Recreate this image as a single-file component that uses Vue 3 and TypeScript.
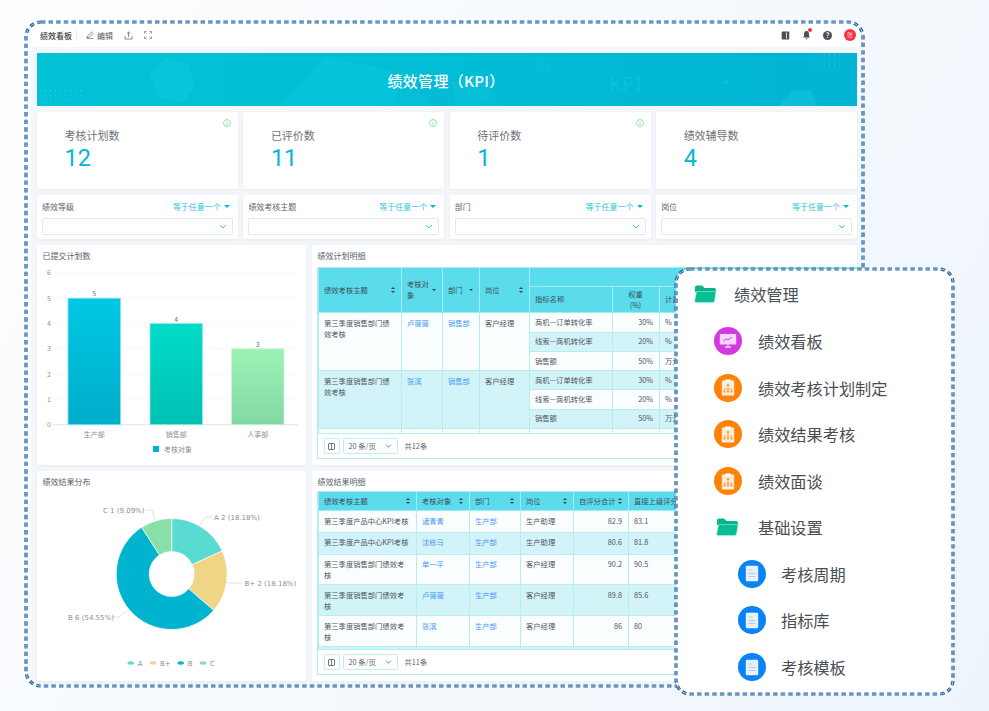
<script setup lang="ts">
const cards = [
  { label: '考核计划数', value: '12', info: true },
  { label: '已评价数', value: '11', info: true },
  { label: '待评价数', value: '1', info: true },
  { label: '绩效辅导数', value: '4', info: false },
]
const filters = ['绩效等级', '绩效考核主题', '部门', '岗位']
const baseY = 161.7
const yTicks = [0, 1, 2, 3, 4, 5, 6].map((v) => ({ v, y: baseY - v * 25.3 }))
const bars = [
  { name: '生产部', v: 5, x: 31, g: 'url(#b1)', s: '#7fe3f2' },
  { name: '销售部', v: 4, x: 113, g: 'url(#b2)', s: '#8cf0e2' },
  { name: '人事部', v: 3, x: 194.5, g: 'url(#b3)', s: '#c8f7d2' },
].map((b) => ({ ...b, h: b.v * 25.3, y: baseY - b.v * 25.3 }))

const pieData = [
  { n: 'A', pct: 2 / 11, c: '#5adbd2' },
  { n: 'B+', pct: 2 / 11, c: '#f0d587' },
  { n: 'B', pct: 6 / 11, c: '#00b4d0' },
  { n: 'C', pct: 1 / 11, c: '#88dfa8' },
]
const cx = 134.7
const cy = 85
const ro = 55.5
const ri = 22.5
let acc = 0
const pie = pieData.map((p) => {
  const a0 = acc * Math.PI * 2
  acc += p.pct
  const a1 = acc * Math.PI * 2
  const pt = (r: number, a: number) =>
    `${(cx + r * Math.sin(a)).toFixed(2)} ${(cy - r * Math.cos(a)).toFixed(2)}`
  const large = a1 - a0 > Math.PI ? 1 : 0
  return {
    ...p,
    d: `M${pt(ro, a0)} A${ro} ${ro} 0 ${large} 1 ${pt(ro, a1)} L${pt(ri, a1)} A${ri} ${ri} 0 ${large} 0 ${pt(ri, a0)} Z`,
  }
})
const pieLabels = [
  { t: 'C 1 (9.09%)', x: 66, y: 23.5, d: 'M109 21H115L118 31' },
  { t: 'A 2 (18.18%)', x: 177, y: 31, d: 'M175 28H169L161 37' },
  { t: 'B+ 2 (18.18%)', x: 207.5, y: 96.5, d: 'M205 94H192L187 93' },
  { t: 'B 6 (54.55%)', x: 31, y: 130.5, d: 'M74 128H82L90 122' },
]
const pieLegend = [
  { n: 'A', x: 93.7, c: '#5adbd2' },
  { n: 'B+', x: 116, c: '#f0d587' },
  { n: 'B', x: 143.7, c: '#00b4d0' },
  { n: 'C', x: 166, c: '#88dfa8' },
]

const planGroups = [
  { name: '卢薇薇', stripe: false },
  { name: '张滨', stripe: true },
]
const metrics = [
  { n: '商机—订单转化率', w: '30%', u: '%' },
  { n: '线索—商机转化率', w: '20%', u: '%' },
  { n: '销售额', w: '50%', u: '万元' },
]
const results = [
  { t: '第三季度产品中心KPI考核', n: '诸青青', p: '生产助理', a: '82.9', b: '83.1', tall: false },
  { t: '第三季度产品中心KPI考核', n: '沈栋马', p: '生产助理', a: '80.6', b: '81.8', tall: false },
  { t: '第三季度销售部门绩效考核', n: '单一平', p: '客户经理', a: '90.2', b: '90.5', tall: true },
  { t: '第三季度销售部门绩效考核', n: '卢薇薇', p: '客户经理', a: '89.8', b: '85.6', tall: true },
  { t: '第三季度销售部门绩效考核', n: '张滨', p: '客户经理', a: '86', b: '80', tall: true },
]
const menu = [
  { t: '绩效看板', k: 'screen' },
  { t: '绩效考核计划制定', k: 'plan' },
  { t: '绩效结果考核', k: 'plan' },
  { t: '绩效面谈', k: 'plan' },
]
const sub = ['考核周期', '指标库', '考核模板']
</script>

<template>
  <div class="page">
    <div class="board">
      <svg class="dash" width="848" height="676" viewBox="0 0 848 676">
        <rect class="d1" x="3" y="3" width="837" height="664" rx="15" />
        <rect class="d2" x="3" y="3" width="837" height="664" rx="15" />
      </svg>
      <header class="toolbar">
        <div class="tool-left">
          <span class="tb-title">绩效看板</span>
          <span class="tb-sep"></span>
          <svg class="ic pencil" width="8" height="8" viewBox="0 0 8 8"><path d="M1 7l.5-2L5.600 1 7 2.400 3 6.500 1 7zM.5 7.600h7" fill="none" stroke="#6b7078" stroke-width=".8" /></svg>
          <span class="tb-edit">编辑</span>
          <svg class="ic up" width="9" height="9" viewBox="0 0 9 9"><path d="M4.500 6V1M2.800 2.600 4.500 1l1.700 1.600M1 5v3h7V5" fill="none" stroke="#6b7078" stroke-width=".8" /></svg>
          <svg class="ic full" width="8" height="8" viewBox="0 0 8 8"><path d="M.5 2.500v-2h2M5.500.5h2v2M7.500 5.500v2h-2M2.500 7.500h-2v-2M2.500 2.500 1.500 1.500M5.500 2.500l1-1M5.500 5.500l1 1M2.500 5.500l-1 1" fill="none" stroke="#6b7078" stroke-width=".7" /></svg>
        </div>
        <div class="tool-right">
          <svg width="9" height="9" viewBox="0 0 9 9"><rect x=".7" y=".5" width="7.600" height="8" rx="1" fill="#4c5059" /><rect x="5.200" y="1.500" width=".8" height="6" fill="#fff" /></svg>
          <span class="bell">
            <svg width="9" height="10" viewBox="0 0 9 10"><path d="M4.500 1C2.700 1 2 2.500 2 4v2L1 7.500h7L7 6V4C7 2.500 6.300 1 4.500 1zM3.500 8.300a1 1 0 0 0 2 0z" fill="#4c5059" /></svg>
            <i></i>
          </span>
          <span class="help">?</span>
          <span class="avatar">张</span>
        </div>
      </header>

      <main class="content">
        <section class="banner">
          <svg class="banner-art" width="820" height="53" viewBox="0 0 820 53">
            <path d="M128 5l25 7 5 23-13 15-25-6-7-24z" fill="#0ecbdc" opacity=".55" />
            <path d="M243 53 L288 3l82 18 25 32z" fill="#08c8dc" opacity=".5" />
            <path d="M358 53l4-24 40-8 54 12 0 20z" fill="#04b8d4" opacity=".4" />
            <path d="M415 30l22-10 19 12-3 14-12 7h-22z" fill="#0ac6dc" opacity=".5" />
            <circle cx="506" cy="13" r="6" fill="none" stroke="#0cc0d8" stroke-width="3" opacity=".45" />
            <path d="M741 53l14-15 20-1 5 16z" fill="#12bfdc" opacity=".7" />
            <path d="M689 26l2 3h-4zM685 30h8" fill="none" stroke="#0cc0d8" stroke-width="1" />
            <text x="572" y="38" class="wm">KPI</text>
          </svg>
          <h1>绩效管理（KPI）</h1>
          <span class="dots dots-a"></span>
          <span class="dots dots-b"></span>
        </section>

        <section class="row4 stats">
          <article v-for="c in cards" :key="c.label" class="card stat">
            <svg v-if="c.info" class="info" width="8" height="8" viewBox="0 0 8 8">
              <circle cx="4" cy="4" r="3.500" fill="none" stroke="#72e096" stroke-width=".8" />
              <path d="M4 2v.8M4 3.500V6" stroke="#72e096" stroke-width=".8" />
            </svg>
            <div class="stat-label">{{ c.label }}</div>
            <div class="stat-value">{{ c.value }}</div>
          </article>
        </section>

        <section class="row4 filters">
          <article v-for="f in filters" :key="f" class="card filter">
            <div class="filter-head">
              <span>{{ f }}</span>
              <span class="any">等于任意一个<i class="tri"></i></span>
            </div>
            <div class="select">
              <svg width="8" height="5" viewBox="0 0 8 5"><path d="M1 1l3 3 3-3" fill="none" stroke="#2cc3da" stroke-width=".9" /></svg>
            </div>
          </article>
        </section>

        <section class="panels">
          <article class="card panel">
            <div class="ptitle">已提交计划数</div>
            <svg class="chart" width="269" height="180" viewBox="0 0 269 180">
              <defs>
                <linearGradient id="b1" x1="0" y1="0" x2="0" y2="1"><stop offset="0" stop-color="#00c8e4" /><stop offset="1" stop-color="#00acca" /></linearGradient>
                <linearGradient id="b2" x1="0" y1="0" x2="0" y2="1"><stop offset="0" stop-color="#00dcc8" /><stop offset="1" stop-color="#00c0b2" /></linearGradient>
                <linearGradient id="b3" x1="0" y1="0" x2="0" y2="1"><stop offset="0" stop-color="#9cf2b6" /><stop offset="1" stop-color="#82d8a2" /></linearGradient>
              </defs>
              <g v-for="t in yTicks" :key="t.v">
                <line x1="16" x2="261" :y1="t.y" :y2="t.y" class="grid" />
                <text x="14" :y="t.y + 2.500" class="axis" text-anchor="end">{{ t.v }}</text>
              </g>
              <line x1="16" x2="261" :y1="baseY" :y2="baseY" class="axisline" />
              <g v-for="b in bars" :key="b.name">
                <rect :x="b.x" :y="b.y" width="52.500" :height="b.h" :fill="b.g" :stroke="b.s" stroke-width=".8" />
                <text :x="b.x + 26.250" :y="b.y - 2" class="axis val" text-anchor="middle">{{ b.v }}</text>
                <text :x="b.x + 26.250" y="173.500" class="axis" text-anchor="middle">{{ b.name }}</text>
              </g>
            </svg>
            <div class="bar-legend"><i></i>考核对象</div>
          </article>

          <article class="card panel">
            <div class="ptitle">绩效计划明细</div>
            <div class="twrap">
              <div class="tclip t1clip">
                <table class="tbl t1">
                  <colgroup>
                    <col class="w83" /><col class="w41" /><col class="w37" /><col class="w50" /><col class="w83" /><col class="w47" /><col class="w198" />
                  </colgroup>
                  <thead>
                    <tr class="h19">
                      <th rowspan="2"><span class="th">绩效考核主题<i class="sort"></i></span></th>
                      <th rowspan="2"><span class="th">考核对象<i class="tri dk"></i></span></th>
                      <th rowspan="2"><span class="th">部门<i class="tri dk"></i></span></th>
                      <th rowspan="2"><span class="th">岗位<i class="sort"></i></span></th>
                      <th colspan="3" class="center">考核指标</th>
                    </tr>
                    <tr class="h26">
                      <th>指标名称</th>
                      <th class="center">权重<br />(%)</th>
                      <th>计量单位</th>
                    </tr>
                  </thead>
                  <tbody v-for="g in planGroups" :key="g.name">
                    <tr v-for="(m, i) in metrics" :key="m.n" class="h19">
                      <template v-if="i === 0">
                        <td rowspan="3" :class="{ stripe: g.stripe }">第三季度销售部门绩效考核</td>
                        <td rowspan="3" :class="{ stripe: g.stripe }"><a>{{ g.name }}</a></td>
                        <td rowspan="3" :class="{ stripe: g.stripe }"><a>销售部</a></td>
                        <td rowspan="3" :class="{ stripe: g.stripe }">客户经理</td>
                      </template>
                      <td :class="{ stripe: g.stripe === (i % 2 === 0) }" class="mid">{{ m.n }}</td>
                      <td :class="{ stripe: g.stripe === (i % 2 === 0) }" class="mid right">{{ m.w }}</td>
                      <td :class="{ stripe: g.stripe === (i % 2 === 0) }" class="mid">{{ m.u }}</td>
                    </tr>
                  </tbody>
                  <tbody>
                    <tr class="h19">
                      <td></td><td></td><td></td><td></td><td></td><td></td><td></td>
                    </tr>
                  </tbody>
                </table>
              </div>
              <div class="pager">
                <span class="pbtn"><svg width="7" height="7" viewBox="0 0 7 7"><rect x=".5" y=".5" width="6" height="6" rx=".5" fill="none" stroke="#555" stroke-width=".8" /><path d="M3.500.5v6" stroke="#555" stroke-width=".8" /></svg></span>
                <span class="psel">20 条/页<svg width="7" height="4" viewBox="0 0 7 4"><path d="M1 .7l2.500 2.500L6 .7" fill="none" stroke="#666" stroke-width=".8" /></svg></span>
                <span class="ptotal">共12条</span>
              </div>
            </div>
          </article>

          <article class="card panel">
            <div class="ptitle">绩效结果分布</div>
            <svg class="chart" width="269" height="192" viewBox="0 0 269 192">
              <path v-for="p in pie" :key="p.n" :d="p.d" :fill="p.c" stroke="#fff" stroke-width=".7" />
              <g v-for="l in pieLabels" :key="l.t">
                <path :d="l.d" fill="none" stroke="#c9ccd0" stroke-width=".6" />
                <text :x="l.x" :y="l.y" class="pie-t">{{ l.t }}</text>
              </g>
              <g v-for="l in pieLegend" :key="l.n">
                <ellipse :cx="l.x" cy="174" rx="3.300" ry="1.700" :fill="l.c" />
                <text :x="l.x + 7" y="176.500" class="pie-t">{{ l.n }}</text>
              </g>
            </svg>
          </article>

          <article class="card panel">
            <div class="ptitle ptitle-tight">绩效结果明细</div>
            <div class="twrap">
              <div class="tclip t2clip">
                <table class="tbl t2">
                  <colgroup>
                    <col class="w98" /><col class="w53" /><col class="w51" /><col class="w53" /><col class="w55" /><col class="w229" />
                  </colgroup>
                  <thead>
                    <tr class="h19">
                      <th><span class="th">绩效考核主题<i class="sort"></i></span></th>
                      <th><span class="th">考核对象<i class="sort"></i></span></th>
                      <th><span class="th">部门<i class="sort"></i></span></th>
                      <th><span class="th">岗位<i class="sort"></i></span></th>
                      <th><span class="th">自评分合计<i class="sort"></i></span></th>
                      <th>直接上级评分</th>
                    </tr>
                  </thead>
                  <tbody>
                    <tr v-for="(r, i) in results" :key="i" :class="r.tall ? 'h30' : 'h22'">
                      <td :class="{ stripe: i % 2 === 1 }">{{ r.t }}</td>
                      <td :class="{ stripe: i % 2 === 1 }"><a>{{ r.n }}</a></td>
                      <td :class="{ stripe: i % 2 === 1 }"><a>生产部</a></td>
                      <td :class="{ stripe: i % 2 === 1 }">{{ r.p }}</td>
                      <td :class="{ stripe: i % 2 === 1 }" class="right">{{ r.a }}</td>
                      <td :class="{ stripe: i % 2 === 1 }">{{ r.b }}</td>
                    </tr>
                    <tr class="h22">
                      <td class="stripe"></td><td class="stripe"></td><td class="stripe"></td><td class="stripe"></td><td class="stripe"></td><td class="stripe"></td>
                    </tr>
                  </tbody>
                </table>
              </div>
              <div class="pager">
                <span class="pbtn"><svg width="7" height="7" viewBox="0 0 7 7"><rect x=".5" y=".5" width="6" height="6" rx=".5" fill="none" stroke="#555" stroke-width=".8" /><path d="M3.500.5v6" stroke="#555" stroke-width=".8" /></svg></span>
                <span class="psel">20 条/页<svg width="7" height="4" viewBox="0 0 7 4"><path d="M1 .7l2.500 2.500L6 .7" fill="none" stroke="#666" stroke-width=".8" /></svg></span>
                <span class="ptotal">共11条</span>
              </div>
            </div>
          </article>
        </section>
      </main>
    </div>

    <aside class="menu">
      <svg class="dash" width="285" height="433" viewBox="0 0 285 433">
        <rect class="d1" x="2" y="2" width="277" height="425" rx="14" />
        <rect class="d2" x="2" y="2" width="277" height="425" rx="14" />
      </svg>
      <div class="m-row m-root">
        <svg class="folder" width="23" height="18" viewBox="0 0 23 18"><path d="M1 2.500Q1 .5 3 .5h5l2.500 2.500H20q2 0 2 2v2H1z" fill="#08b48c" /><path d="M2.500 6.500H22l-1.500 9.500q-.2 1.500-2 1.500H2q-1.500 0-1.300-1.500z" fill="#06bd94" stroke="#bff0e4" stroke-width=".5" /></svg>
        <span>绩效管理</span>
      </div>
      <div v-for="m in menu" :key="m.t" class="m-row m-item">
        <span class="mi" :class="m.k === 'screen' ? 'mi-screen' : 'mi-plan'">
          <svg v-if="m.k === 'screen'" width="18" height="16" viewBox="0 0 18 16"><rect x=".8" y="1" width="16.400" height="10.500" rx="1" fill="#f6d8fa" /><path d="M4 8l3-2 2 1 4-3" fill="none" stroke="#d438e0" stroke-width=".9" /><path d="M6 14h6M9 11.500V14" stroke="#f6d8fa" stroke-width="1.400" /></svg>
          <svg v-else width="14" height="17" viewBox="0 0 14 17"><rect x=".8" y="1.500" width="12.400" height="15" rx="1" fill="#ffecd9" /><rect x="4" y=".5" width="6" height="2.500" fill="#fff" /><path d="M7 6v3M3.500 12v-2h7v2M7 9v3" fill="none" stroke="#ff9a3c" stroke-width=".7" /><rect x="5.900" y="5" width="2.200" height="2.200" fill="#ff9a3c" /><rect x="2.500" y="11.500" width="2" height="2" fill="#ff9a3c" /><rect x="6" y="11.500" width="2" height="2" fill="#ff9a3c" /><rect x="9.500" y="11.500" width="2" height="2" fill="#ff9a3c" /></svg>
        </span>
        <span>{{ m.t }}</span>
      </div>
      <div class="m-row m-item m-folder">
        <svg class="folder" width="23" height="18" viewBox="0 0 23 18"><path d="M1 2.500Q1 .5 3 .5h5l2.500 2.500H20q2 0 2 2v2H1z" fill="#08b48c" /><path d="M2.500 6.500H22l-1.500 9.500q-.2 1.500-2 1.500H2q-1.500 0-1.300-1.500z" fill="#06bd94" stroke="#bff0e4" stroke-width=".5" /></svg>
        <span>基础设置</span>
      </div>
      <div v-for="s in sub" :key="s" class="m-row m-sub">
        <span class="mi mi-doc">
          <svg width="14" height="17" viewBox="0 0 14 17"><rect x=".8" y=".8" width="12.400" height="15.400" rx="1.200" fill="#e6f2ff" /><path d="M3.500 5h4M3.500 8.500h7M3.500 11.500h7" stroke="#a9cdf8" stroke-width="1.100" /></svg>
        </span>
        <span>{{ s }}</span>
      </div>
    </aside>
  </div>
</template>

<style>
html,
body {
  margin: 0;
  padding: 0;
}
</style>

<style scoped>
.page {
  position: relative;
  width: 989px;
  height: 711px;
  overflow: hidden;
  box-sizing: border-box;
  padding: 23px 0 0 31px;
  background: linear-gradient(120deg, #fdfeff 0%, #f5f9fd 55%, #edf4fc 100%);
  font-family: "Noto Sans CJK SC", "Noto Sans", sans-serif;
  color: #4a4f57;
}
.board {
  position: relative;
  width: 830px;
  height: 661px;
  background: #f3f6fa;
  border-radius: 8px 8px 0 0;
}
.dash {
  position: absolute;
  z-index: 5;
  pointer-events: none;
}
.board > .dash {
  left: -8px;
  top: -4px;
}
.d1,
.d2 {
  fill: none;
  stroke-dasharray: 4.400 3.200;
}
.d1 {
  stroke: #22649c;
  stroke-width: 3.200;
}
.d2 {
  stroke: #d5e4f0;
  stroke-width: .8;
}
.toolbar {
  height: 24px;
  background: #fff;
  display: flex;
  align-items: center;
  justify-content: space-between;
  font-size: 8px;
  padding: 0 5px 0 9px;
  box-sizing: border-box;
  border-radius: 8px 8px 0 0;
}
.tool-left,
.tool-right {
  display: flex;
  align-items: center;
}
.tb-title {
  color: #3c4149;
  font-weight: 500;
}
.tb-sep {
  width: 1px;
  height: 12px;
  background: #eceef1;
  margin: 0 9px 0 4px;
}
.tb-edit {
  margin: 0 11px 0 3px;
  color: #555a62;
}
.full {
  margin-left: 11px;
}
.tool-right {
  gap: 12px;
}
.bell {
  position: relative;
  display: flex;
}
.bell i {
  position: absolute;
  right: -1px;
  top: -2px;
  width: 4px;
  height: 4px;
  border-radius: 50%;
  background: #f5343f;
}
.help {
  width: 9px;
  height: 9px;
  border-radius: 50%;
  background: #4c5059;
  color: #fff;
  font-size: 7px;
  line-height: 9px;
  text-align: center;
  font-weight: 700;
}
.avatar {
  width: 12px;
  height: 12px;
  border-radius: 50%;
  background: #f5343f;
  color: #fdd;
  font-size: 6px;
  line-height: 12px;
  text-align: center;
}
.content {
  padding: 6px 4px 0 6px;
  display: flex;
  flex-direction: column;
  gap: 6px;
}
.banner {
  position: relative;
  height: 53px;
  background: linear-gradient(90deg, #02c2d6 0%, #02bed6 40%, #00b5d4 100%);
  display: flex;
  align-items: center;
  justify-content: center;
  overflow: hidden;
}
.banner h1 {
  position: relative;
  margin: 2px 0 0;
  font-size: 15px;
  font-weight: 500;
  color: #fff;
  letter-spacing: .3px;
  transform: translateX(-1px);
}
.banner-art {
  position: absolute;
  inset: 0;
}
.wm {
  font-family: "Noto Sans", sans-serif;
  font-size: 19px;
  letter-spacing: 1.500px;
  fill: #0bc0da;
}
.dots {
  position: absolute;
  width: 40px;
  height: 15px;
  background-image: radial-gradient(circle, rgba(255, 255, 255, .2) .5px, transparent .8px);
  background-size: 5px 5px;
}
.dots-a {
  left: 6px;
  bottom: 3px;
}
.dots-b {
  right: 5px;
  top: 0;
}
.row4 {
  display: grid;
  grid-template-columns: repeat(4, 1fr);
  gap: 5.500px;
}
.card {
  background: #fff;
  border-radius: 2px;
  box-shadow: 0 1px 3px rgba(200, 210, 225, .25);
}
.stat {
  position: relative;
  height: 77px;
  padding: 16px 0 0 27.500px;
  box-sizing: border-box;
}
.info {
  position: absolute;
  right: 7px;
  top: 7px;
}
.stat-label {
  font-size: 11px;
  line-height: 14px;
  color: #6d7278;
}
.stat-value {
  font-family: Roboto, "Liberation Sans", sans-serif;
  font-size: 23.500px;
  line-height: 24px;
  color: #00b7d4;
  margin-top: 3.500px;
}
.filter {
  height: 44px;
  padding: 5px;
  box-sizing: border-box;
}
.filter-head {
  display: flex;
  justify-content: space-between;
  align-items: center;
  height: 12px;
  font-size: 8px;
  color: #60656c;
  padding-right: 3px;
}
.any {
  color: #2cc3da;
  display: flex;
  align-items: center;
}
.tri {
  display: inline-block;
  width: 0;
  height: 0;
  border-left: 3px solid transparent;
  border-right: 3px solid transparent;
  border-top: 3.500px solid #06b6d4;
  margin-left: 3px;
}
.tri.dk {
  border-top-color: #3a4048;
  border-left-width: 2px;
  border-right-width: 2px;
  border-top-width: 2.500px;
}
.select {
  margin-top: 5.500px;
  height: 17.500px;
  box-sizing: border-box;
  border: 1px solid #e5e8ec;
  border-radius: 2px;
  display: flex;
  align-items: center;
  justify-content: flex-end;
  padding-right: 5px;
}
.panels {
  display: grid;
  grid-template-columns: 269px 545px;
  grid-template-rows: 220px 210px;
  gap: 6px;
}
.panel {
  position: relative;
  overflow: hidden;
}
.ptitle {
  height: 22px;
  line-height: 22px;
  font-size: 8px;
  color: #5a5f66;
  padding-left: 5.500px;
}
.ptitle-tight {
  height: 20px;
}
.chart {
  display: block;
  margin-top: -4px;
}
.grid {
  stroke: #f3f4f6;
  stroke-width: .6;
}
.axisline {
  stroke: #dcdfe3;
  stroke-width: .8;
}
.axis {
  font-size: 7px;
  fill: #8d9196;
}
.val {
  fill: #777;
}
.bar-legend {
  position: absolute;
  left: 116px;
  top: 199px;
  display: flex;
  align-items: center;
  font-size: 7px;
  color: #8d9196;
  gap: 5px;
}
.bar-legend i {
  width: 6px;
  height: 6px;
  background: #00b4d0;
}
.pie-t {
  font-size: 7px;
  fill: #8b8f94;
  font-family: "DejaVu Sans", "Noto Sans", sans-serif;
}
.twrap {
  margin-left: 4.500px;
  border: 1px solid #b0ecf5;
  border-top: 0;
  box-sizing: border-box;
  width: 541px;
}
.tclip {
  overflow: hidden;
}
.t1clip {
  height: 166px;
}
.t2clip {
  height: 158px;
}
.tbl {
  border-collapse: collapse;
  table-layout: fixed;
  width: 539px;
  font-size: 7.300px;
  line-height: 11px;
  color: #50555c;
}
.tbl th {
  background: #5adcec;
  border: 1px solid #a4eaf4;
  font-weight: 400;
  text-align: left;
  padding: 1px 5.500px;
  color: #3f5058;
}
.tbl td {
  background: #fbfeff;
  border: 1px solid #b6edf5;
  padding: 4.500px 5.500px 2px;
  vertical-align: top;
  word-break: break-all;
}
.tbl td.stripe {
  background: #d2f3f8;
}
.tbl td.mid {
  vertical-align: middle;
  padding-top: 1px;
  padding-bottom: 1px;
}
.tbl .right {
  text-align: right;
}
.tbl .center {
  text-align: center;
}
.tbl a {
  color: #4a98f8;
}
.th {
  display: flex;
  justify-content: space-between;
  align-items: center;
}
.sort {
  position: relative;
  flex: none;
  width: 4px;
  height: 6px;
}
.sort::before,
.sort::after {
  content: "";
  position: absolute;
  left: 0;
  border-left: 2px solid transparent;
  border-right: 2px solid transparent;
}
.sort::before {
  top: 0;
  border-bottom: 2.500px solid #3a4048;
}
.sort::after {
  bottom: 0;
  border-top: 2.500px solid #3a4048;
}
.h19 {
  height: 19.300px;
}
.h26 {
  height: 26px;
}
.h22 {
  height: 21.700px;
}
.h30 {
  height: 30.700px;
}
.w83 { width: 83px; }
.w41 { width: 41px; }
.w37 { width: 37px; }
.w50 { width: 50px; }
.w47 { width: 47px; }
.w198 { width: 198px; }
.w98 { width: 98px; }
.w53 { width: 53px; }
.w51 { width: 51px; }
.w55 { width: 55px; }
.w229 { width: 229px; }
.pager {
  height: 25px;
  display: flex;
  align-items: center;
  padding-left: 6px;
  font-size: 7.300px;
  color: #60656c;
  border-top: 1px solid #b6edf5;
  box-sizing: border-box;
}
.pbtn,
.psel {
  height: 16px;
  box-sizing: border-box;
  border: 1px solid #bfeef5;
  border-radius: 2px;
  display: flex;
  align-items: center;
}
.pbtn {
  width: 16px;
  justify-content: center;
}
.psel {
  width: 55px;
  margin-left: 3px;
  justify-content: space-between;
  padding: 0 5px;
}
.ptotal {
  margin-left: 7px;
}
.menu {
  position: absolute;
  left: 674px;
  top: 267px;
  width: 281px;
  height: 429px;
  box-sizing: border-box;
  padding: 4px 0 0 20px;
  z-index: 6;
}
.menu::before {
  content: "";
  position: absolute;
  inset: 2px;
  background: #fff;
  border-radius: 14px;
}
.menu > .dash {
  left: 0;
  top: 0;
}
.m-row {
  position: relative;
  display: flex;
  align-items: center;
  font-size: 16.200px;
  color: #4a4e55;
  height: 46.700px;
}
.m-root {
  gap: 17px;
}
.m-item {
  margin-left: 20px;
  gap: 16px;
}
.m-folder {
  margin-left: 22px;
  gap: 19px;
  height: 46px;
}
.m-sub {
  margin-left: 44px;
  gap: 15px;
}
.mi {
  width: 28px;
  height: 28px;
  border-radius: 50%;
  flex: none;
  display: flex;
  align-items: center;
  justify-content: center;
}
.mi-screen {
  background: #d438e0;
}
.mi-plan {
  background: #ff8208;
}
.mi-doc {
  background: #0a84f5;
}
.folder {
  flex: none;
}
</style>
